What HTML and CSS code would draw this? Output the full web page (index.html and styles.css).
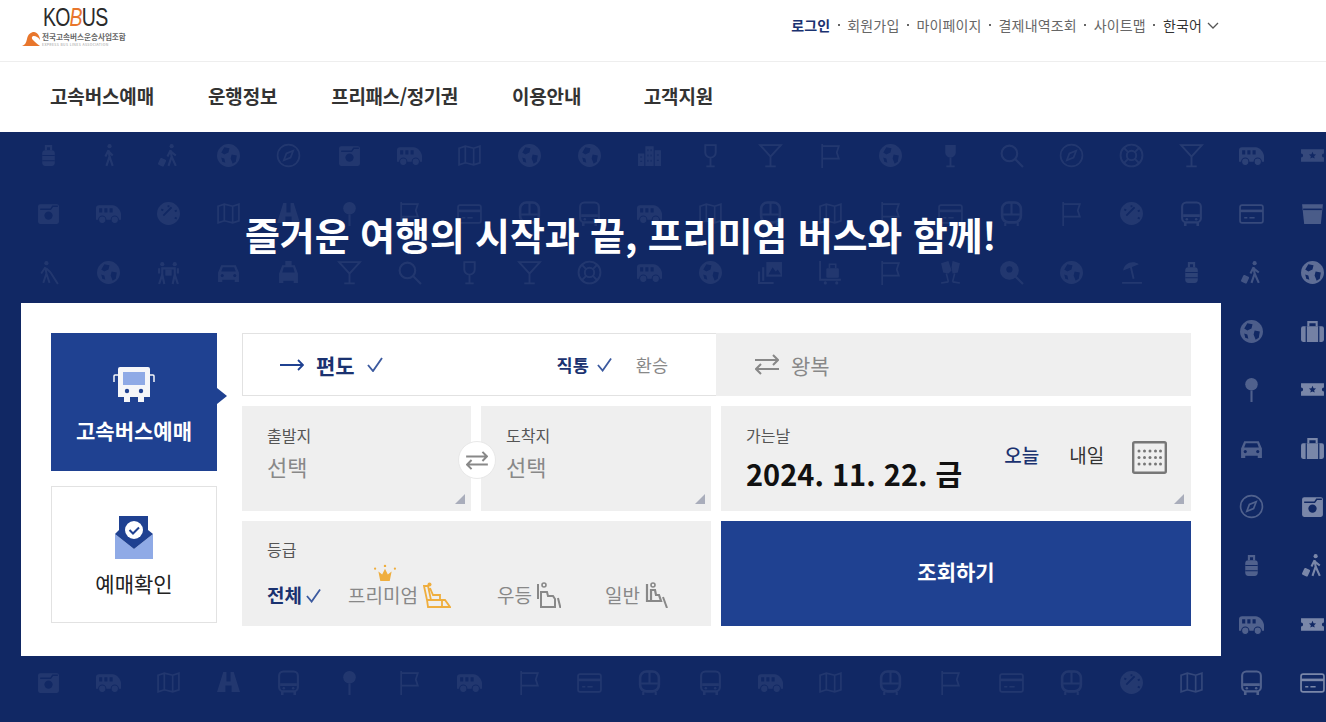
FILE: index.html
```html
<!DOCTYPE html>
<html lang="ko">
<head>
    <meta charset="UTF-8">
    <title>KOBUS 고속버스 통합예매</title>
    <link rel="stylesheet" href="styles.css">
</head>
<body>
    <svg class="icon-defs" aria-hidden="true">
        <symbol id="i-lug" viewBox="0 0 24 24"><rect x="6" y="7" width="12" height="15" rx="3" fill="currentColor"/><path d="M9.5 7V3h5v4" fill="none" stroke="currentColor" stroke-width="2"/><path d="M6 12h12M6 17h12" stroke="#112864"/></symbol>
        <symbol id="i-walk" viewBox="0 0 24 24"><circle cx="13" cy="3" r="2" fill="currentColor"/><path d="M12 7l-3 6M12 7l1 6-3 9M13 13l3 9M12 8l4 4" fill="none" stroke="currentColor" stroke-width="2"/></symbol>
        <symbol id="i-hiker" viewBox="0 0 24 24"><circle cx="15" cy="3" r="2" fill="currentColor"/><path d="M14 7l-3 6M14 7l1 6-3 9M15 13l4 9M14 8l5 4" fill="none" stroke="currentColor" stroke-width="2"/><rect x="3" y="15" width="6" height="7" rx="1" transform="rotate(25 6 18)" fill="currentColor"/></symbol>
        <symbol id="i-globe" viewBox="0 0 24 24"><circle cx="12" cy="12" r="11" fill="currentColor"/><path d="M8 4l5 1-1 4-4 2-3-2zM15 11l5 1-1 6-3 2-2-5zM5 14l3 1 1 4-3-1z" fill="#112864"/></symbol>
        <symbol id="i-compass" viewBox="0 0 24 24"><circle cx="12" cy="12" r="10.5" fill="none" stroke="currentColor" stroke-width="1.6"/><path d="M16.500 7.500l-2.500 6.500-6.500 2.500 2.500-6.500z" fill="none" stroke="currentColor" stroke-width="1.6"/></symbol>
        <symbol id="i-camera" viewBox="0 0 24 24"><rect x="2" y="3" width="20" height="19" rx="2" fill="currentColor"/><path d="M4 8h10l2-3h5" fill="none" stroke="#112864" stroke-width="1.5"/><circle cx="12" cy="14" r="4" fill="#112864"/></symbol>
        <symbol id="i-van" viewBox="0 0 24 24"><path d="M0 7a3 3 0 0 1 3-3h13c4 0 8 5 8 9v5H0z" fill="currentColor"/><path d="M3 7h3v4H3zM8 7h3v4H8zM13 7h3v4h-3z" fill="#112864"/><circle cx="6" cy="18" r="3.500" fill="currentColor" stroke="#112864"/><circle cx="18" cy="18" r="3.500" fill="currentColor" stroke="#112864"/></symbol>
        <symbol id="i-map" viewBox="0 0 24 24"><path d="M2 5l6-2 8 2 6-2v16l-6 2-8-2-6 2zM8 3v16M16 5v16" fill="none" stroke="currentColor" stroke-width="1.600"/></symbol>
        <symbol id="i-city" viewBox="0 0 24 24"><path d="M1 10h6v12H1zM8 3h8v19H8zM17 7h6v15h-6z" fill="currentColor"/><path d="M10 6h1v2h-1zM13 6h1v2h-1zM10 11h1v2h-1zM13 11h1v2h-1zM10 16h1v2h-1zM13 16h1v2h-1zM3 13h2v1H3zM3 17h2v1H3zM19 11h2v1h-2zM19 16h2v1h-2z" fill="#112864"/></symbol>
        <symbol id="i-wine" viewBox="0 0 24 24"><path d="M7 2h10v7a5 5 0 0 1-10 0zM12 14v8M8 22.500h8" fill="none" stroke="currentColor" stroke-width="1.800"/></symbol>
        <symbol id="i-winef" viewBox="0 0 24 24"><path d="M7 2h10v7a5 5 0 0 1-10 0z" fill="currentColor"/><path d="M12 14v8M8 22.500h8" fill="none" stroke="currentColor" stroke-width="1.800"/></symbol>
        <symbol id="i-cocktail" viewBox="0 0 24 24"><path d="M2 2h20L12 13zM12 13v9M7 22.500h10" fill="none" stroke="currentColor" stroke-width="1.800"/></symbol>
        <symbol id="i-flag" viewBox="0 0 24 24"><path d="M4 1v23M4 3h16l-2 6 2 6H4" fill="none" stroke="currentColor" stroke-width="1.600"/></symbol>
        <symbol id="i-search" viewBox="0 0 24 24"><circle cx="10" cy="10" r="7.500" fill="none" stroke="currentColor" stroke-width="2"/><path d="M15 15l8 8" stroke="currentColor" stroke-width="2"/></symbol>
        <symbol id="i-buoy" viewBox="0 0 24 24"><circle cx="12" cy="12" r="10.500" fill="none" stroke="currentColor" stroke-width="1.800"/><circle cx="12" cy="12" r="4.500" fill="none" stroke="currentColor" stroke-width="1.800"/><path d="M5 5l4 4M19 5l-4 4M5 19l4-4M19 19l-4-4" stroke="currentColor" stroke-width="1.800"/></symbol>
        <symbol id="i-ticket" viewBox="0 0 24 24"><path d="M1 6h22v4a2 2 0 0 0 0 4v4H1v-4a2 2 0 0 0 0-4z" fill="currentColor"/><path d="M12 8.500l1 2.200 2.400.3-1.800 1.600.5 2.400-2.100-1.200-2.100 1.200.5-2.400-1.800-1.600 2.400-.3z" fill="#112864"/></symbol>
        <symbol id="i-card" viewBox="0 0 24 24"><rect x="1" y="4" width="22" height="17" rx="2" fill="none" stroke="currentColor" stroke-width="1.600"/><path d="M1 9.500h22" stroke="currentColor" stroke-width="2.500"/><path d="M5 16h3M10 16h5" stroke="currentColor" stroke-width="1.500"/></symbol>
        <symbol id="i-bus" viewBox="0 0 24 24"><rect x="3" y="1.500" width="18" height="19" rx="4" fill="none" stroke="currentColor" stroke-width="2"/><path d="M4 14h16M6 21v3M18 21v3" stroke="currentColor" stroke-width="2.500"/><circle cx="7.500" cy="17.500" r="1.200" fill="currentColor"/><circle cx="16.500" cy="17.500" r="1.200" fill="currentColor"/></symbol>
        <symbol id="i-bus2" viewBox="0 0 24 24"><rect x="3" y="1.500" width="18" height="19" rx="6" fill="none" stroke="currentColor" stroke-width="2.500"/><path d="M12 2v11M4 13h16M6 21v3M18 21v3" stroke="currentColor" stroke-width="2"/></symbol>
        <symbol id="i-dial" viewBox="0 0 24 24"><circle cx="12" cy="12" r="11" fill="currentColor"/><path d="M7 14l8-8M5 8l2 1M12 4v2M18 10l2-1M18 16l2 1" stroke="#112864" stroke-width="1.800"/></symbol>
        <symbol id="i-suit" viewBox="0 0 24 24"><rect x="1" y="7" width="22" height="15" rx="2" fill="currentColor"/><path d="M8 7V3h8v4" fill="none" stroke="currentColor" stroke-width="2"/><path d="M6 7v15M18 7v15" stroke="#112864" stroke-width="1.200"/></symbol>
        <symbol id="i-pin" viewBox="0 0 24 24"><circle cx="12" cy="7" r="6" fill="currentColor"/><path d="M12 13v11" stroke="currentColor" stroke-width="2"/></symbol>
        <symbol id="i-binoc" viewBox="0 0 24 24"><path d="M7 2h3v9h4V2h3l6 19H15v-6H9v6H1z" fill="currentColor"/></symbol>
        <symbol id="i-car" viewBox="0 0 24 24"><path d="M5 5h14l3 7v9h-4v-2H6v2H2v-9z" fill="currentColor"/><path d="M6.500 7h11l1.500 4H5z" fill="#112864"/><circle cx="6" cy="15" r="1.500" fill="#112864"/><circle cx="18" cy="15" r="1.500" fill="#112864"/></symbol>
        <symbol id="i-taxi" viewBox="0 0 24 24"><path d="M9 1h6v4h3l3 8v9h-4v-2H7v2H3v-9l3-8h3z" fill="currentColor"/><path d="M7.500 7h9l1.500 5H6z" fill="#112864"/></symbol>
        <symbol id="i-blind" viewBox="0 0 24 24"><circle cx="10" cy="3" r="2" fill="currentColor"/><path d="M9 7l-4 6M9 7l1 6-3 9M10 13l3 9M10 8l4 4M14 12l7 11" fill="none" stroke="currentColor" stroke-width="1.800"/></symbol>
        <symbol id="i-people" viewBox="0 0 24 24"><circle cx="6" cy="4" r="2" fill="currentColor"/><circle cx="18" cy="4" r="2" fill="currentColor"/><path d="M6 7v7M6 14l-3 9M6 14l2 9M18 7v7M18 14l-2 9M18 14l3 9M6 8h12M3 8v5M21 8v5" fill="none" stroke="currentColor" stroke-width="2"/><rect x="9" y="9" width="6" height="6" fill="currentColor"/></symbol>
        <symbol id="i-photos" viewBox="0 0 24 24"><rect x="8" y="2" width="15" height="14" fill="currentColor"/><path d="M10 14l4-7 3 4 2-2 3 5z" fill="#112864"/><path d="M5 7v13M1 11v11h14" fill="none" stroke="currentColor" stroke-width="2"/></symbol>
        <symbol id="i-cart" viewBox="0 0 24 24"><path d="M2 1v18h20" fill="none" stroke="currentColor" stroke-width="1.800"/><rect x="8" y="8" width="12" height="9" rx="1" fill="currentColor"/><path d="M11 8V4h6v4" fill="none" stroke="currentColor" stroke-width="1.500"/><circle cx="7" cy="22" r="1.500" fill="currentColor"/><circle cx="18" cy="22" r="1.500" fill="currentColor"/></symbol>
        <symbol id="i-cheers" viewBox="0 0 24 24"><path d="M3 3l7-2 3 9-3 3-5-1zM21 3l-7-2-1 6 1 6 5-1z" fill="currentColor"/><path d="M8 13l2 8M3 22l7-1M16 13l-2 8M21 22l-7-1" stroke="currentColor" stroke-width="1.500" fill="none"/></symbol>
        <symbol id="i-pinsearch" viewBox="0 0 24 24"><circle cx="10" cy="10" r="9" fill="currentColor"/><circle cx="10" cy="9" r="3" fill="#112864"/><path d="M16 16l7 7" stroke="currentColor" stroke-width="2"/></symbol>
        <symbol id="i-umbrella" viewBox="0 0 24 24"><path d="M4 10C5 3 13 0 19 4z" fill="currentColor"/><path d="M11 5l3 13M3 22h19" stroke="currentColor" stroke-width="1.800" fill="none"/></symbol>
        <symbol id="i-cup" viewBox="0 0 24 24"><path d="M2 3h20l-2 19H4z" fill="currentColor"/><path d="M3 8h18" stroke="#112864" stroke-width="1.500"/></symbol>
    </svg>

    <header>
        <div class="top-bar">
            <a class="logo" href="#">
                <span class="logo-name">KO<i>B</i>US</span>
                <span class="logo-sub">
                    <svg class="logo-mark" viewBox="0 0 18 15"><path d="M0 15c3-1 4-3 5-7 1-5 4-7 7-7 3 0 6 4 6 8-2-3-4-4-6-4-2 0-3 2-1 4 2 2 4 4 7 6z" fill="#e8762c"/></svg>
                    <span class="logo-text">
                        <b>전국고속버스운송사업조합</b>
                        <em>EXPRESS BUS LINES ASSOCIATION</em>
                    </span>
                </span>
            </a>
            <ul class="util-menu">
                <li class="on"><a href="#">로그인</a></li>
                <li><a href="#">회원가입</a></li>
                <li><a href="#">마이페이지</a></li>
                <li><a href="#">결제내역조회</a></li>
                <li><a href="#">사이트맵</a></li>
                <li class="lang"><a href="#">한국어</a>
                    <svg class="chevron" viewBox="0 0 12 7"><path d="M1 1l5 5 5-5" fill="none" stroke="#555" stroke-width="1.300"/></svg>
                </li>
            </ul>
        </div>
        <nav class="gnb">
            <a href="#">고속버스예매</a>
            <a href="#">운행정보</a>
            <a class="gnb-pass" href="#">프리패스/정기권</a>
            <a href="#">이용안내</a>
            <a class="gnb-last" href="#">고객지원</a>
        </nav>
    </header>

    <section class="hero">
        <div class="icon-wall" id="icon-wall"></div>
        <h1>즐거운 여행의 시작과 끝, 프리미엄 버스와 함께!</h1>

        <div class="booking">
            <div class="side-tabs">
                <a class="side-tab active" href="#">
                    <svg class="side-icon" viewBox="0 0 42 37">
                        <path d="M7 1h28a2 2 0 0 1 2 2v28h-6v5h-6v-5h-8v5h-6v-5H5V3a2 2 0 0 1 2-2z" fill="#f5f6f9"/>
                        <rect x="10" y="6" width="22" height="13" fill="#8faae6"/>
                        <circle cx="14" cy="25" r="2.200" fill="#1f4191"/>
                        <circle cx="28" cy="25" r="2.200" fill="#1f4191"/>
                        <path d="M5 9H2a1 1 0 0 0-1 1v6M37 9h3a1 1 0 0 1 1 1v6" fill="none" stroke="#f5f6f9" stroke-width="1.500"/>
                    </svg>
                    <span>고속버스예매</span>
                </a>
                <a class="side-tab" href="#">
                    <svg class="side-icon" viewBox="0 0 40 44">
                        <path d="M1 18l19 15 19-15v25H1z" fill="#8faae6"/>
                        <path d="M5 0h29v14l5 4-19 15L1 18l4-4z" fill="#1f4191"/>
                        <circle cx="20" cy="14" r="9" fill="#fff"/>
                        <path d="M15.500 14l3.500 3.500 6-6" fill="none" stroke="#1f4191" stroke-width="2"/>
                    </svg>
                    <span>예매확인</span>
                </a>
            </div>

            <form class="search-form">
                <div class="trip-row">
                    <div class="trip-tab active">
                        <div class="trip-main">
                            <svg class="trip-arrow" viewBox="0 0 24 12"><path d="M0 6h23M18 1l5 5-5 5" fill="none" stroke="#1f4191" stroke-width="1.800"/></svg>
                            <strong>편도</strong>
                            <svg class="check" viewBox="0 0 16 15"><path d="M1 8l5 6 9-13" fill="none" stroke="#3c5a9f" stroke-width="1.900"/></svg>
                        </div>
                        <div class="route-type">
                            <strong>직통</strong>
                            <svg class="check small" viewBox="0 0 16 15"><path d="M1 8l5 6 9-13" fill="none" stroke="#3c5a9f" stroke-width="1.900"/></svg>
                            <span>환승</span>
                        </div>
                    </div>
                    <div class="trip-tab">
                        <svg class="swap-arrows" viewBox="0 0 24 21"><path d="M0 6h23M18 1l5 5-5 5M24 15H1M6 10l-5 5 5 5" fill="none" stroke="#888" stroke-width="2"/></svg>
                        <span>왕복</span>
                    </div>
                </div>

                <div class="field-row">
                    <div class="route-fields">
                        <div class="field">
                            <label>출발지</label>
                            <p class="placeholder">선택</p>
                        </div>
                        <div class="field">
                            <label>도착지</label>
                            <p class="placeholder">선택</p>
                        </div>
                        <button class="swap-btn" type="button">
                            <svg viewBox="0 0 24 21"><path d="M0 6h23M18 1l5 5-5 5M24 15H1M6 10l-5 5 5 5" fill="none" stroke="#888" stroke-width="2.200"/></svg>
                        </button>
                    </div>
                    <div class="field date-field">
                        <div class="date-value">
                            <label>가는날</label>
                            <p>2024. 11. 22. 금</p>
                        </div>
                        <div class="date-quick">
                            <a class="on" href="#">오늘</a>
                            <a href="#">내일</a>
                        </div>
                        <svg class="calendar" viewBox="0 0 35 33">
                            <rect x="1.200" y="1.200" width="32.600" height="30.600" rx="1.500" fill="none" stroke="#777" stroke-width="2.400"/>
                            <g fill="#777">
                                <circle cx="7" cy="10" r="1.500"/><circle cx="12.500" cy="10" r="1.500"/><circle cx="18" cy="10" r="1.500"/><circle cx="23.500" cy="10" r="1.500"/><circle cx="28.500" cy="10" r="1.500"/>
                                <circle cx="7" cy="16.500" r="1.500"/><circle cx="12.500" cy="16.500" r="1.500"/><circle cx="18" cy="16.500" r="1.500"/><circle cx="23.500" cy="16.500" r="1.500"/><circle cx="28.500" cy="16.500" r="1.500"/>
                                <circle cx="7" cy="23" r="1.500"/><circle cx="12.500" cy="23" r="1.500"/><circle cx="18" cy="23" r="1.500"/><circle cx="23.500" cy="23" r="1.500"/><circle cx="28.500" cy="23" r="1.500"/>
                            </g>
                        </svg>
                    </div>
                </div>

                <div class="field-row">
                    <div class="field grade-field">
                        <label>등급</label>
                        <div class="grade-list">
                            <div class="grade active"><strong>전체</strong>
                                <svg class="check small" viewBox="0 0 16 15"><path d="M1 8l5 6 9-13" fill="none" stroke="#3c5a9f" stroke-width="1.900"/></svg>
                            </div>
                            <div class="grade premium">
                                <svg class="crown" viewBox="0 0 24 18">
                                    <path d="M5 8l4 3 3-6 3 6 4-3-2 10H7z" fill="#efae3e"/>
                                    <circle cx="12" cy="2" r="1.300" fill="#efae3e"/><circle cx="1.500" cy="5" r="1.200" fill="#efae3e"/><circle cx="22.500" cy="5" r="1.200" fill="#efae3e"/>
                                </svg>
                                <span>프리미엄</span>
                                <svg class="seat seat-premium" viewBox="0 0 28 26">
                                    <circle cx="6.500" cy="2.500" r="2" fill="#efae3e"/>
                                    <path d="M1 4h4l3 14H4zM4 18h15v7H5zM19 18h3l5 7h-8zM7 6l3 7h7v5" fill="none" stroke="#efae3e" stroke-width="1.800"/>
                                </svg>
                            </div>
                            <div class="grade">
                                <span>우등</span>
                                <svg class="seat" viewBox="0 0 24 26">
                                    <circle cx="7" cy="3" r="2" fill="none" stroke="#888" stroke-width="1.600"/>
                                    <path d="M1 2v15M4 25V10h6l1 4h5l2 3v8z" fill="none" stroke="#888" stroke-width="2"/>
                                    <path d="M21 16l2.500 10" stroke="#888" stroke-width="2"/>
                                </svg>
                            </div>
                            <div class="grade">
                                <span>일반</span>
                                <svg class="seat" viewBox="0 0 24 26">
                                    <circle cx="8" cy="3" r="2" fill="none" stroke="#888" stroke-width="1.600"/>
                                    <path d="M2 2v17h14l-2-6h-3l-1-5H6v11" fill="none" stroke="#888" stroke-width="2.200"/>
                                    <path d="M18 15l4 11" stroke="#888" stroke-width="2"/>
                                </svg>
                            </div>
                        </div>
                    </div>
                    <button class="submit-btn" type="button">조회하기</button>
                </div>
            </form>
        </div>
    </section>
    <script src="pattern.js"></script>
</body>
</html>
```

FILE: styles.css
```css
* { margin: 0; padding: 0; box-sizing: border-box; font-family: 'Noto Sans CJK KR', 'Noto Sans', sans-serif; }
html, body { height: 100%; overflow: hidden; }
body { background-color: #ffffff; color: #222222; }
a { color: inherit; text-decoration: none; }
ul { list-style: none; }
button { border: 0; cursor: pointer; }
.icon-defs { display: none; }

.top-bar { height: 62px; padding: 5px 107px 0 22px; display: flex; justify-content: space-between; align-items: flex-start; border-bottom: 1px solid #eeeeee; }
.logo { width: 106px; display: flex; flex-direction: column; }
.logo-name { height: 26px; padding-left: 21px; font-family: 'Liberation Sans', sans-serif; font-size: 25px; line-height: 24px; letter-spacing: -1px; color: #2a2a2a; transform: scaleX(0.78); transform-origin: 21px 0; white-space: nowrap; }
.logo-name i { color: #e8762c; font-family: 'Liberation Sans', sans-serif; }
.logo-sub { display: flex; gap: 2px; }
.logo-mark { flex: none; width: 18px; height: 15px; }
.logo-text { display: flex; flex-direction: column; white-space: nowrap; }
.logo-text b { font-size: 7.6px; line-height: 11px; font-weight: 700; color: #666666; }
.logo-text em { font-size: 3.5px; line-height: 5px; font-style: normal; letter-spacing: 0.35px; color: #999999; }

.util-menu { display: flex; align-items: center; margin-top: 10px; font-size: 14px; line-height: 20px; letter-spacing: 0.15px; color: #666666; }
.util-menu li { display: flex; align-items: center; white-space: nowrap; }
.util-menu li + li::before { content: ""; width: 2px; height: 2px; margin: 0 7.5px; background-color: #666666; }
.util-menu .on { color: #1a3270; font-weight: 700; }
.util-menu .lang { color: #333333; }
.chevron { width: 12px; height: 7px; margin-left: 5px; }

.gnb { height: 70px; padding: 0 0 3px 50px; display: flex; align-items: center; gap: 54px; font-size: 19px; letter-spacing: -0.15px; font-weight: 700; color: #333333; }
.gnb-pass { letter-spacing: -0.4px; }
.gnb-last { margin-left: 8.5px; }

.hero { position: relative; height: 590px; padding: 77px 21px 0; background-color: #112864; overflow: hidden; }
.icon-wall { position: absolute; top: -6px; left: 18px; display: grid; grid-template-columns: repeat(22, 60.2px); grid-auto-rows: 58.6px; color: #ffffff; }
.wall-cell { display: flex; align-items: center; justify-content: center; }
.wall-cell svg { width: 25px; height: 25px; }

.hero h1 { position: relative; height: 94px; padding-left: 224px; font-size: 38px; line-height: 50px; letter-spacing: -0.12px; font-weight: 700; color: #ffffff; white-space: nowrap; }
.booking { position: relative; width: 1200px; height: 353px; padding: 30px; display: flex; gap: 25px; background-color: #ffffff; }

.side-tabs { flex: none; width: 166px; display: flex; flex-direction: column; gap: 15px; }
.side-tab { position: relative; height: 137px; padding-top: 5px; display: flex; flex-direction: column; align-items: center; justify-content: center; gap: 8px; border: 1px solid #e2e2e2; font-size: 21px; line-height: 30px; color: #222222; }
.side-tab.active { height: 138px; padding-top: 6px; gap: 12px; border: 0; background-color: #1f4191; color: #ffffff; font-weight: 700; }
.side-tab.active::after { content: ""; position: absolute; top: 55px; right: -10px; border-left: 10px solid #1f4191; border-top: 8px solid transparent; border-bottom: 8px solid transparent; }
.side-tab.active .side-icon { width: 42px; height: 37px; }
.side-icon { width: 40px; height: 44px; }

.search-form { flex: none; width: 949px; display: flex; flex-direction: column; gap: 10px; }
.trip-row { height: 63px; display: flex; }
.trip-tab { display: flex; align-items: center; background-color: #efefef; color: #888888; font-size: 21px; }
.trip-tab:last-child { flex: 1; padding-left: 39px; gap: 12px; }
.trip-tab.active { width: 474px; padding: 0 48px 0 37px; justify-content: space-between; background-color: #ffffff; border: 1px solid #e2e2e2; border-right: 0; }
.trip-main { display: flex; align-items: center; gap: 12px; color: #1a3270; font-size: 21px; }
.trip-arrow { width: 24px; height: 12px; }
.swap-arrows { width: 24px; height: 21px; }
.check { width: 16px; height: 15px; }
.check.small { width: 15px; height: 15px; }
.route-type { display: flex; align-items: center; gap: 8px; font-size: 17.5px; color: #1a3270; }
.route-type span { margin-left: 16px; color: #888888; }

.field-row { height: 105px; display: flex; gap: 10px; }
.route-fields { position: relative; flex: none; width: 469px; display: flex; gap: 10px; }
.route-fields .field { flex: 1; }
.route-fields .field:first-child { flex: none; width: 229px; }
.field { position: relative; padding: 17px 25px 0; background-color: #efefef; }
.field::after { content: ""; position: absolute; right: 6px; bottom: 7px; border-left: 10px solid transparent; border-bottom: 10px solid #a9adbb; }
.field label { display: block; font-size: 16px; line-height: 24px; color: #555555; }
.placeholder { margin-top: 3px; font-size: 22px; line-height: 32px; color: #888888; }
.swap-btn { position: absolute; top: 35px; left: 216px; width: 38px; height: 38px; display: flex; align-items: center; justify-content: center; border: 1px solid #e8e8e8; border-radius: 50%; background-color: #ffffff; }
.swap-btn svg { width: 22px; height: 19px; }

.date-field { flex: 1; min-width: 0; padding-right: 0; display: flex; align-items: flex-start; }
.date-value p { margin-top: 6px; font-size: 29px; line-height: 40px; font-weight: 700; color: #111111; white-space: nowrap; }
.date-quick { flex: none; margin: 19px 0 0 42px; display: flex; gap: 30px; font-size: 19px; line-height: 26px; color: #333333; white-space: nowrap; }
.date-quick .on { color: #1a3270; font-weight: 500; }
.calendar { flex: none; width: 35px; height: 33px; margin: 18px 0 0 28px; }
.date-field::after { right: 7px; }

.grade-field { flex: none; width: 469px; padding-top: 16px; }
.grade-field::after { display: none; }
.grade-list { margin-top: 21px; display: flex; align-items: flex-end; }
.grade { position: relative; display: flex; align-items: center; gap: 5px; font-size: 19px; line-height: 26px; color: #888888; }
.grade.active { width: 81px; gap: 4px; color: #1a3270; }
.grade:nth-child(2) { width: 149px; }
.grade:nth-child(3) { width: 108px; }
.grade .seat { width: 24px; height: 26px; }
.grade .seat-premium { width: 28px; }
.crown { position: absolute; top: -18px; left: 25px; width: 24px; height: 17px; }
.submit-btn { flex: 1; padding-bottom: 5px; background-color: #1f4191; color: #ffffff; font-size: 21px; font-weight: 700; }
```

FILE: pattern.js
```js
// background icons of the hero, row by row
const rows = [
    'lug walk hiker globe compass camera van map globe globe city wine cocktail flag globe winef search compass buoy cocktail van ticket',
    'camera van dial map binoc pin flag card bus2 bus van map bus2 map flag card bus2 flag dial bus card cup',
    'blind globe people car taxi cocktail search wine cocktail buoy van globe photos cart flag cheers pinsearch globe umbrella lug hiker globe',
    '- - - - - - - - - - - - - - - - - - - - globe suit',
    '- - - - - - - - - - - - - - - - - - - - pin ticket',
    '- - - - - - - - - - - - - - - - - - - - car suit',
    '- - - - - - - - - - - - - - - - - - - - compass camera',
    '- - - - - - - - - - - - - - - - - - - - lug hiker',
    '- - - - - - - - - - - - - - - - - - - - van ticket',
    'camera van map binoc bus pin flag van flag card bus2 bus van map bus2 flag card bus2 dial map bus card'
];

const clamp = v => Math.min(1, Math.max(0, v));
const wall = document.getElementById('icon-wall');

rows.forEach((row, r) => {
    row.split(' ').forEach((name, c) => {
        const cell = document.createElement('div');
        cell.className = 'wall-cell';
        if (name !== '-') {
            // icons get brighter toward the lower right corner
            const side = clamp((60.2 * c + 48 - 1100) / 220);
            const down = clamp((58.6 * r + 155 - 100) / 250);
            cell.style.opacity = (0.07 + 0.4 * side * side * down).toFixed(3);
            cell.innerHTML = `<svg><use href="#i-${name}"></use></svg>`;
        }
        wall.appendChild(cell);
    });
});
```
